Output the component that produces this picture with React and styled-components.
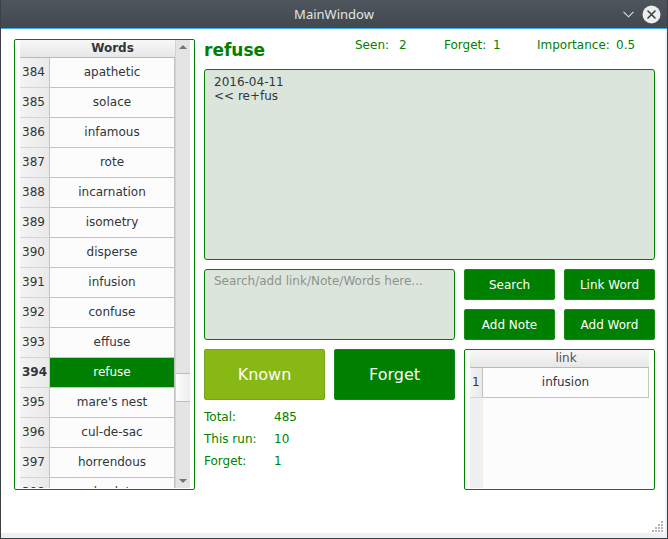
import React from "react";
import styled, { createGlobalStyle } from "styled-components";

const GREEN = "#008000";
const FIELD = "#dce5dc";
const TEXT = "#31363b";
const GRID = "#c4c4c4";

const GlobalStyle = createGlobalStyle`
  html, body { margin: 0; padding: 0; background: #ffffff; }
  body {
    font-family: "DejaVu Sans", "Liberation Sans", sans-serif;
    font-size: 12px;
    color: ${TEXT};
  }
  * { box-sizing: border-box; }
`;

const Window = styled.div`
  width: 668px;
  height: 539px;
  display: flex;
  flex-direction: column;
  border: 1px solid #3c4148;
  border-top: none;
  overflow: hidden;
  background: #3c4148;
`;

const TitleBar = styled.div`
  height: 29px;
  flex: none;
  display: grid;
  grid-template-columns: 1fr auto 1fr;
  align-items: center;
  background: linear-gradient(#4e555d, #42484f);
  border-bottom: 1px solid #3daee9;
  font-family: "Noto Sans", "DejaVu Sans", sans-serif;
  font-size: 13px;
  color: #e3e5e7;
`;

const TitleText = styled.div`
  grid-column: 2;
  line-height: 28px;
`;

const TitleControls = styled.div`
  grid-column: 3;
  justify-self: end;
  display: flex;
  align-items: center;
  gap: 8px;
  padding-right: 6px;
  height: 28px;
`;

const Body = styled.div`
  flex: 1;
  display: flex;
  background: #eff0f1;
  padding: 0 2px 5px 0;
`;

const Central = styled.div`
  flex: 1;
  display: flex;
  flex-direction: column;
  background: #ffffff;
  padding: 10px 0 0 13px;
`;

const Content = styled.div`
  display: flex;
  gap: 9px;
  flex: none;
`;

const Footer = styled.div`
  flex: 1;
  display: flex;
  justify-content: flex-end;
  align-items: flex-end;
  padding-right: 1px;
`;

/* ---------- tables ---------- */

const Frame = styled.div`
  width: ${(p) => p.$w}px;
  height: ${(p) => p.$h}px;
  border: 1px solid ${GREEN};
  border-radius: 2px;
  padding: 0 ${(p) => p.$padRight}px 1px 5px;
  display: flex;
  flex: none;
`;

const Grid = styled.div`
  flex: 1;
  display: flex;
  flex-direction: column;
  overflow: hidden;
  background: #fcfcfc;
`;

const HeaderRow = styled.div`
  height: 18px;
  flex: none;
  display: flex;
  background: linear-gradient(#f8f8f8, #e7e7e7);
  border-bottom: 1px solid #b9b9b9;
`;

const HeaderCorner = styled.div`
  width: ${(p) => p.$w}px;
  flex: none;
`;

const HeaderCell = styled.div`
  flex: 1;
  text-align: center;
  line-height: 17px;
  font-weight: ${(p) => (p.$bold ? "bold" : "normal")};
  color: ${(p) => (p.$bold ? TEXT : "#4d5257")};
`;

const Row = styled.div`
  height: 30px;
  flex: none;
  display: flex;
`;

const NumCell = styled.div`
  width: ${(p) => p.$w}px;
  flex: none;
  padding-left: 2px;
  line-height: 29px;
  background: linear-gradient(to right, #f4f4f4, #e9e9e9);
  border-right: 1px solid ${GRID};
  border-bottom: 1px solid #d4d4d4;
  font-weight: ${(p) => (p.$current ? "bold" : "normal")};
`;

const WordCell = styled.div`
  flex: 1;
  text-align: center;
  line-height: 29px;
  white-space: nowrap;
  background: ${(p) => (p.$selected ? GREEN : "#fcfcfc")};
  color: ${(p) => (p.$selected ? "#ffffff" : TEXT)};
  border-right: 1px solid ${GRID};
  border-bottom: 1px solid ${GRID};
`;

const Filler = styled.div`
  flex: 1;
  display: flex;
`;

const FillerNum = styled.div`
  width: ${(p) => p.$w}px;
  background: #eeeff0;
`;

const ScrollBar = styled.div`
  width: 15px;
  flex: none;
  display: flex;
  flex-direction: column;
  background: #e4e4e4;
  border-left: 1px solid #d2d2d2;
`;

const ScrollArrow = styled.div`
  height: 14px;
  flex: none;
  display: flex;
  align-items: center;
  justify-content: center;
`;

const Triangle = styled.div`
  width: 0;
  height: 0;
  border-left: 4px solid transparent;
  border-right: 4px solid transparent;
  ${(p) =>
    p.$down
      ? "border-top: 4px solid #747474;"
      : "border-bottom: 4px solid #747474;"}
`;

const Track = styled.div`
  height: ${(p) => (p.$h ? `${p.$h}px` : "auto")};
  flex: ${(p) => (p.$h ? "none" : "1")};
`;

const Thumb = styled.div`
  height: 29px;
  flex: none;
  background: linear-gradient(to right, #fcfcfc, #ececec);
  border-top: 1px solid #bdbdbd;
  border-bottom: 1px solid #bdbdbd;
`;

/* ---------- right side ---------- */

const RightPanel = styled.div`
  width: 451px;
  display: flex;
  flex-direction: column;
`;

const WordHeader = styled.div`
  height: 30px;
  display: flex;
  align-items: flex-start;
`;

const WordTitle = styled.div`
  width: 151px;
  padding-top: 1px;
  font-size: 17px;
  line-height: 20px;
  font-weight: bold;
  color: ${GREEN};
`;

const StatGroup = styled.div`
  width: ${(p) => (p.$w ? `${p.$w}px` : "auto")};
  display: flex;
  line-height: 12px;
  color: ${GREEN};
`;

const StatLabel = styled.span`
  width: ${(p) => p.$w}px;
  flex: none;
`;

const NoteArea = styled.div`
  height: 191px;
  border: 1px solid ${GREEN};
  border-radius: 3px;
  background: ${FIELD};
  padding: 5px 9px;
  line-height: 14px;
  white-space: pre;
  color: ${TEXT};
`;

const InputRow = styled.div`
  margin-top: 9px;
  height: 71px;
  display: flex;
  gap: 9px;
`;

const SearchBox = styled.textarea`
  width: 251px;
  height: 71px;
  flex: none;
  border: 1px solid ${GREEN};
  border-radius: 3px;
  background: ${FIELD};
  padding: 4px 9px;
  font-family: inherit;
  font-size: 12px;
  line-height: 14px;
  color: ${TEXT};
  resize: none;
  outline: none;
  &::placeholder { color: #8d928d; opacity: 1; }
`;

const ButtonGrid = styled.div`
  display: grid;
  grid-template-columns: 91px 91px;
  grid-template-rows: 31px 31px;
  gap: 9px;
`;

const ActionButton = styled.button`
  background: ${GREEN};
  border: 1px solid #1b8a1b;
  border-radius: 2px;
  color: #ffffff;
  font-family: inherit;
  font-size: 12px;
  padding: 0;
`;

const BottomRow = styled.div`
  margin-top: 9px;
  height: 141px;
  display: flex;
  gap: 9px;
`;

const LeftCol = styled.div`
  width: 251px;
  display: flex;
  flex-direction: column;
`;

const BigButtons = styled.div`
  display: flex;
  gap: 9px;
`;

const BigButton = styled.button`
  width: 121px;
  height: 51px;
  background: ${(p) => (p.$light ? "#87b814" : GREEN)};
  border: 1px solid ${(p) => (p.$light ? "#76a51f" : "#14851a")};
  border-radius: 2px;
  color: #fbfbfb;
  font-family: inherit;
  font-size: 16px;
  padding: 0;
`;

const Totals = styled.div`
  margin-top: 6px;
  display: flex;
  flex-direction: column;
  color: ${GREEN};
`;

const TotalRow = styled.div`
  height: 22px;
  line-height: 22px;
  display: flex;
`;

const TotalLabel = styled.span`
  width: 70px;
`;

const words = [
  [384, "apathetic"],
  [385, "solace"],
  [386, "infamous"],
  [387, "rote"],
  [388, "incarnation"],
  [389, "isometry"],
  [390, "disperse"],
  [391, "infusion"],
  [392, "confuse"],
  [393, "effuse"],
  [394, "refuse"],
  [395, "mare's nest"],
  [396, "cul-de-sac"],
  [397, "horrendous"],
  [398, "obsolete"],
];

export default function App() {
  return (
    <>
      <GlobalStyle />
      <Window>
        <TitleBar>
          <TitleText>MainWindow</TitleText>
          <TitleControls>
            <svg width="11" height="7" viewBox="0 0 11 7">
              <path d="M0.5 0.8 L5.5 5.8 L10.5 0.8" fill="none" stroke="#dfe2e4" strokeWidth="1.1" />
            </svg>
            <svg width="19" height="19" viewBox="0 0 19 19">
              <circle cx="9.5" cy="9.5" r="9" fill="#eceded" />
              <path d="M6 6 L13 13 M13 6 L6 13" stroke="#3a3f45" strokeWidth="1.6" strokeLinecap="round" />
            </svg>
          </TitleControls>
        </TitleBar>
        <Body>
          <Central>
            <Content>
              <Frame $w={181} $h={451} $padRight={4}>
                <Grid>
                  <HeaderRow>
                    <HeaderCorner $w={30} />
                    <HeaderCell $bold>Words</HeaderCell>
                  </HeaderRow>
                  {words.map(([n, w]) => (
                    <Row key={n}>
                      <NumCell $w={30} $current={n === 394}>{n}</NumCell>
                      <WordCell $selected={n === 394}>{w}</WordCell>
                    </Row>
                  ))}
                </Grid>
                <ScrollBar>
                  <ScrollArrow><Triangle /></ScrollArrow>
                  <Track $h={319} />
                  <Thumb />
                  <Track />
                  <ScrollArrow><Triangle $down /></ScrollArrow>
                </ScrollBar>
              </Frame>

              <RightPanel>
                <WordHeader>
                  <WordTitle>refuse</WordTitle>
                  <StatGroup $w={89}>
                    <StatLabel $w={44}>Seen:</StatLabel>
                    <span>2</span>
                  </StatGroup>
                  <StatGroup $w={93}>
                    <StatLabel $w={49}>Forget:</StatLabel>
                    <span>1</span>
                  </StatGroup>
                  <StatGroup>
                    <StatLabel $w={79}>Importance:</StatLabel>
                    <span>0.5</span>
                  </StatGroup>
                </WordHeader>

                <NoteArea>{"2016-04-11\n<< re+fus"}</NoteArea>

                <InputRow>
                  <SearchBox placeholder="Search/add link/Note/Words here..." />
                  <ButtonGrid>
                    <ActionButton>Search</ActionButton>
                    <ActionButton>Link Word</ActionButton>
                    <ActionButton>Add Note</ActionButton>
                    <ActionButton>Add Word</ActionButton>
                  </ButtonGrid>
                </InputRow>

                <BottomRow>
                  <LeftCol>
                    <BigButtons>
                      <BigButton $light>Known</BigButton>
                      <BigButton>Forget</BigButton>
                    </BigButtons>
                    <Totals>
                      <TotalRow><TotalLabel>Total:</TotalLabel><span>485</span></TotalRow>
                      <TotalRow><TotalLabel>This run:</TotalLabel><span>10</span></TotalRow>
                      <TotalRow><TotalLabel>Forget:</TotalLabel><span>1</span></TotalRow>
                    </Totals>
                  </LeftCol>

                  <Frame $w={191} $h={141} $padRight={5}>
                    <Grid>
                      <HeaderRow>
                        <HeaderCorner $w={13} />
                        <HeaderCell>link</HeaderCell>
                      </HeaderRow>
                      <Row>
                        <NumCell $w={13}>1</NumCell>
                        <WordCell>infusion</WordCell>
                      </Row>
                      <Filler>
                        <FillerNum $w={13} />
                      </Filler>
                    </Grid>
                  </Frame>
                </BottomRow>
              </RightPanel>
            </Content>
            <Footer>
              <svg width="13" height="13" viewBox="0 0 13 13">
                {[
                  [10, 1],
                  [7, 4], [10, 4],
                  [4, 7], [7, 7], [10, 7],
                  [1, 10], [4, 10], [7, 10], [10, 10],
                ].map(([x, y]) => (
                  <rect key={`${x}-${y}`} x={x} y={y} width="2" height="2" fill="#b4b6b8" />
                ))}
              </svg>
            </Footer>
          </Central>
        </Body>
      </Window>
    </>
  );
}
